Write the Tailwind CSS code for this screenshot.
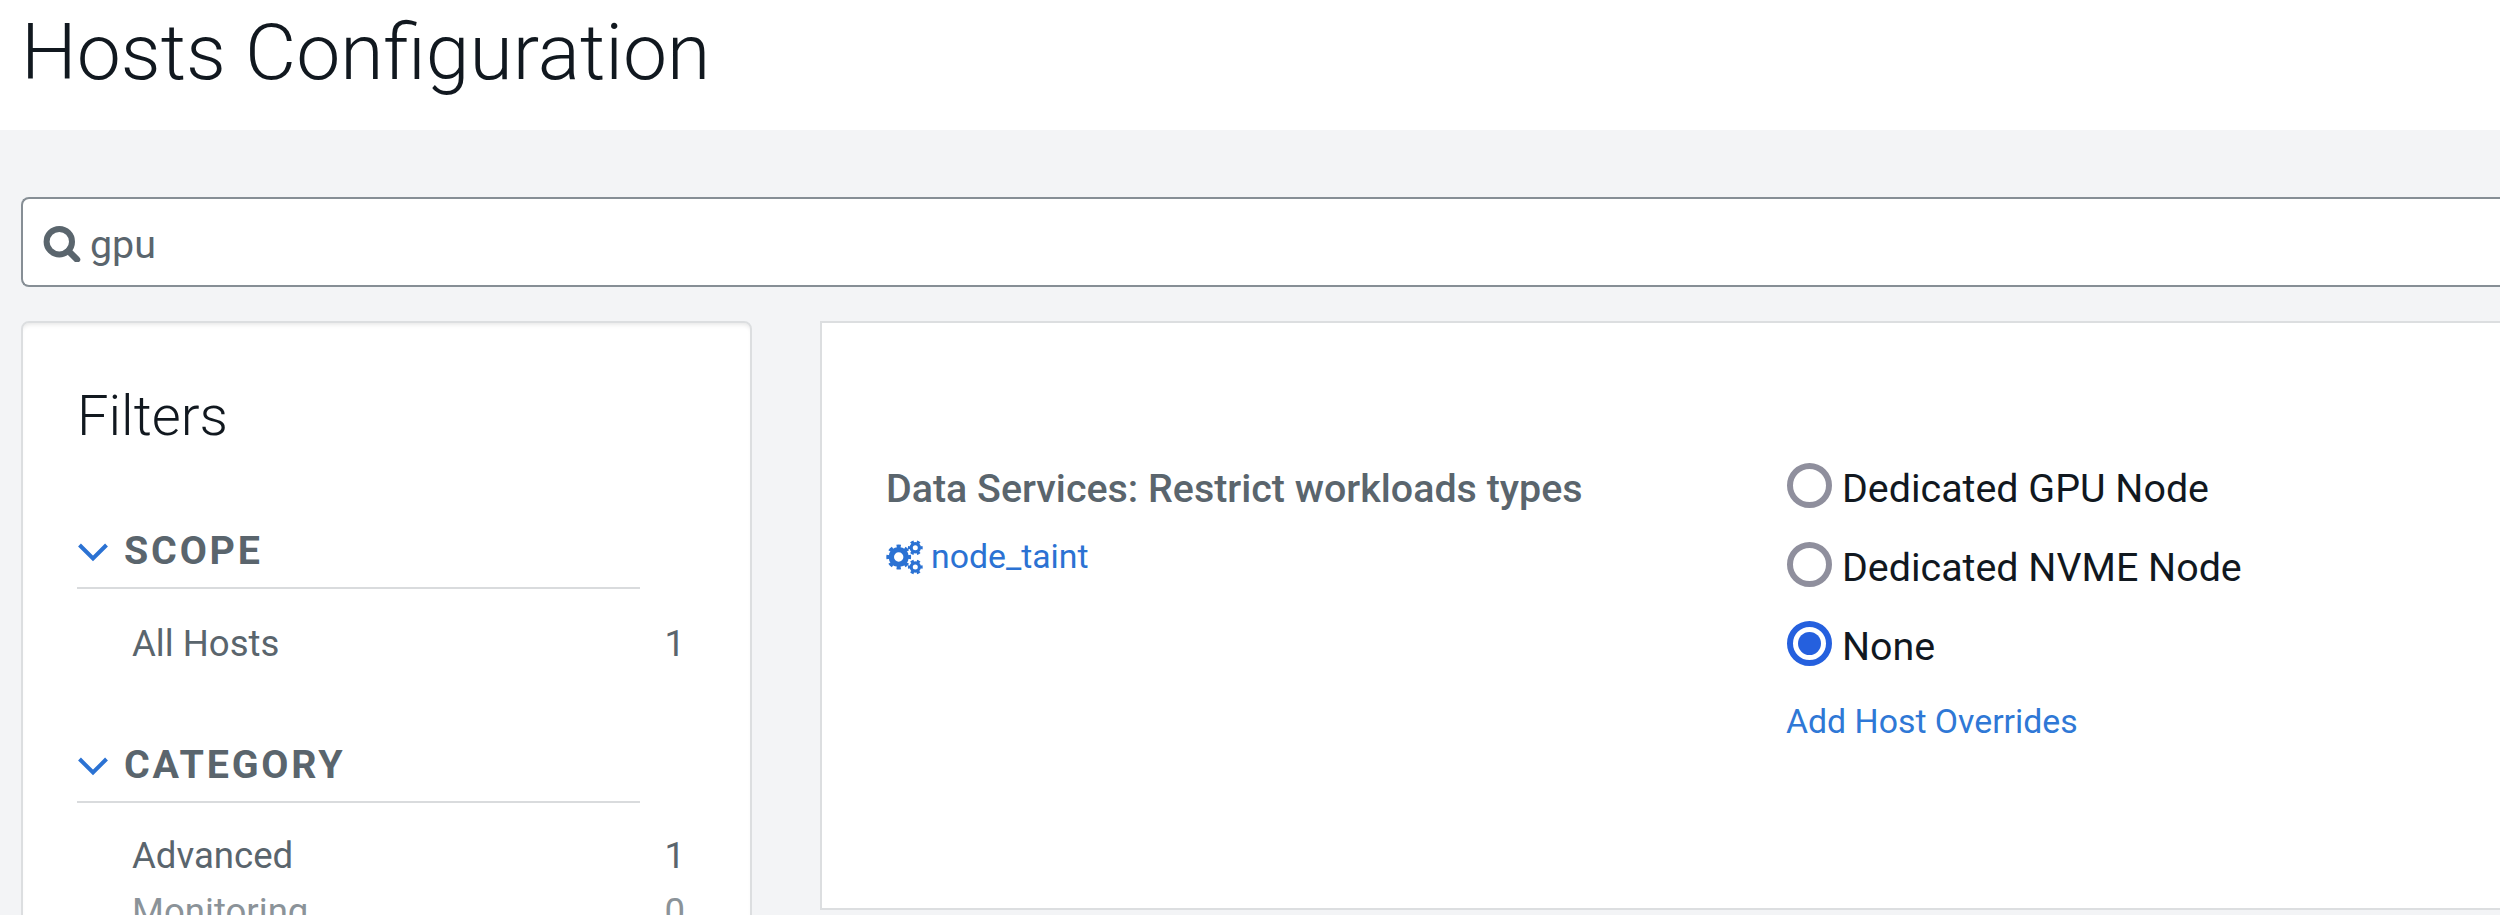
<!DOCTYPE html>
<html lang="en">
<head>
<meta charset="utf-8">
<title>Hosts Configuration</title>
<script src="https://cdn.jsdelivr.net/npm/@tailwindcss/browser@4"></script>
</head>
<body class="h-[915px] w-[2500px] overflow-hidden bg-[#f3f4f6] font-['Roboto',sans-serif] text-[#11181f]">
<header class="h-[130px] bg-white pl-[21px]">
  <h1 class="text-[78.7px] leading-[104px] font-light">Hosts Configuration</h1>
</header>
<main class="pt-[67px] pl-[21px]">
  <div class="flex h-[90px] items-center rounded-l-[8px] border-2 border-r-0 border-[#868e95] bg-white pl-[20px] text-[39.4px] text-[#5a656d]">
    <svg class="mt-[1px] h-[38px] w-[38px]" viewBox="0 0 38 38" fill="none" stroke="#5a656d"><circle cx="16.3" cy="17.7" r="12.7" stroke-width="6"/><path d="M25.5 27L34 35.5" stroke-width="6.5" stroke-linecap="round"/></svg>
    <span class="ml-[9px] pt-[5px]">gpu</span>
  </div>
  <div class="mt-[34px] flex items-start">
    <aside class="h-[620px] w-[731px] shrink-0 rounded-t-[8px] border-2 border-[#dcdee0] bg-white pt-[58px] pl-[54px] shadow-[inset_0_4px_5px_-3px_rgba(0,0,0,0.12)]">
      <h2 class="text-[56px] leading-[70px] font-light">Filters</h2>
      <div class="mt-[62px] flex h-[76px] w-[563px] items-center border-b-2 border-[#d9dbdd] pt-[1px] text-[39.4px] font-bold tracking-[2.8px] text-[#5a656d]">
        <svg class="mt-[3px] mr-[15px] h-[20px] w-[32px]" viewBox="0 0 32 20" fill="none" stroke="#2b72d3" stroke-width="4"><path d="M2.5 3L16 16.5L29.5 3"/></svg>
        <span>SCOPE</span>
      </div>
      <div class="mt-[27px] flex w-[608px] justify-between pl-[55px] text-[36.6px] leading-[56px] text-[#5a656d]"><span>All Hosts</span><span>1</span></div>
      <div class="mt-[55px] flex h-[76px] w-[563px] items-center border-b-2 border-[#d9dbdd] pt-[1px] text-[39.4px] font-bold tracking-[2.8px] text-[#5a656d]">
        <svg class="mt-[3px] mr-[15px] h-[20px] w-[32px]" viewBox="0 0 32 20" fill="none" stroke="#2b72d3" stroke-width="4"><path d="M2.5 3L16 16.5L29.5 3"/></svg>
        <span>CATEGORY</span>
      </div>
      <div class="mt-[24px] flex w-[608px] justify-between pl-[55px] text-[36.6px] leading-[57px] text-[#5a656d]"><span>Advanced</span><span>1</span></div>
      <div class="-mt-[1px] flex w-[608px] justify-between pl-[55px] text-[36.6px] leading-[57px] text-[#8b9399]"><span>Monitoring</span><span>0</span></div>
    </aside>
    <section class="ml-[68px] flex h-[589px] flex-1 border-2 border-r-0 border-[#dcdee0] bg-white pt-[138px] pl-[64px]">
      <div class="w-[900px]">
        <h3 class="text-[39.4px] leading-[56px] font-medium text-[#5a656d]">Data Services: Restrict workloads types</h3>
        <a class="mt-[13px] flex items-center text-[33.8px] leading-[52px] text-[#2b72d3]">
          <svg class="mr-[7px] h-[36px] w-[38px]" viewBox="0 0 38 36" fill="none" stroke="#2b72d3">
            <circle cx="12.7" cy="18" r="7.4" stroke-width="5.4"/>
            <circle cx="12.7" cy="18" r="10.7" stroke-width="3.4" pathLength="16" stroke-dasharray="1 1" stroke-dashoffset=".5"/>
            <circle cx="29.3" cy="8.7" r="4.1" stroke-width="3.2"/>
            <circle cx="29.3" cy="8.7" r="6.1" stroke-width="2.6" pathLength="12" stroke-dasharray="1 1" stroke-dashoffset=".5"/>
            <circle cx="29.3" cy="28" r="4.1" stroke-width="3.2"/>
            <circle cx="29.3" cy="28" r="6.1" stroke-width="2.6" pathLength="12" stroke-dasharray="1 1" stroke-dashoffset=".5"/>
          </svg>
          <span class="pt-[1px]">node_taint</span>
        </a>
      </div>
      <div class="text-[39.4px]">
        <label class="flex h-[79px] items-start gap-[10px] leading-[56px]"><i class="mt-[2px] ml-[1px] h-[45px] w-[45px] rounded-full border-[6px] border-[#8f8f9d]"></i><span>Dedicated GPU Node</span></label>
        <label class="flex h-[79px] items-start gap-[10px] leading-[56px]"><i class="mt-[2px] ml-[1px] h-[45px] w-[45px] rounded-full border-[6px] border-[#8f8f9d]"></i><span>Dedicated NVME Node</span></label>
        <label class="flex h-[79px] items-start gap-[10px] leading-[56px]"><i class="mt-[2px] ml-[1px] flex h-[45px] w-[45px] items-center justify-center rounded-full border-[6px] border-[#2560de]"><b class="h-[23px] w-[23px] rounded-full bg-[#2560de]"></b></i><span>None</span></label>
        <a class="-mt-[1px] block text-[33.8px] leading-[50px] text-[#2f78d6]">Add Host Overrides</a>
      </div>
    </section>
  </div>
</main>
</body>
</html>
